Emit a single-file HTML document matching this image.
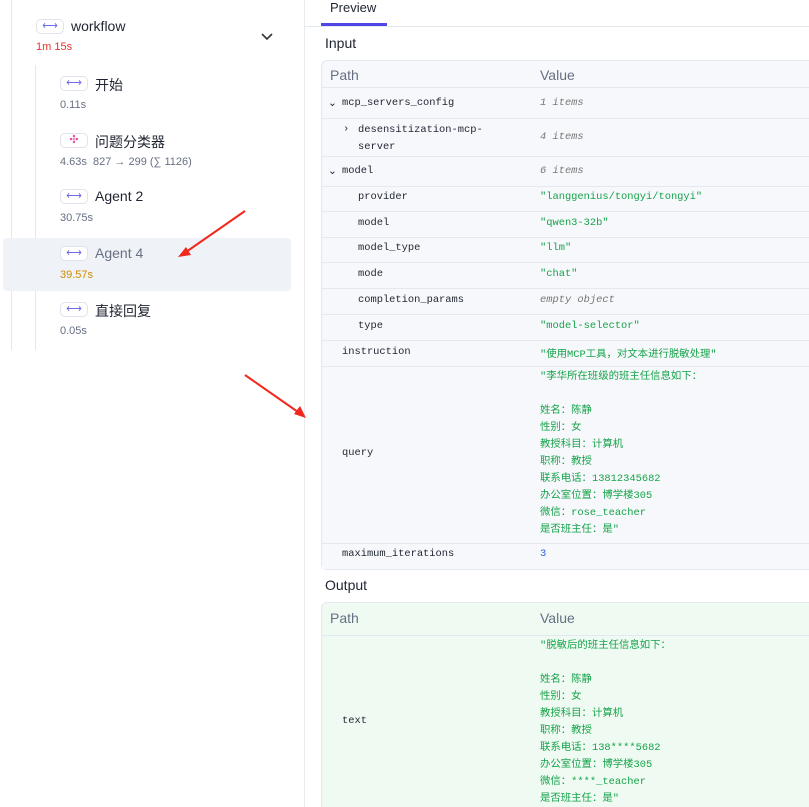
<!DOCTYPE html>
<html><head><meta charset="utf-8"><style>
*{margin:0;padding:0;box-sizing:border-box}
html,body{width:809px;height:807px;overflow:hidden}
body{background:#fff;font-family:"Liberation Sans","Noto Sans CJK SC",sans-serif;position:relative}
.a{position:absolute;white-space:nowrap}
.pill{position:absolute;width:28px;height:15px;border:1px solid #dfe3ec;border-radius:5px;background:#fff;color:#6c6cf0;font-size:11px;line-height:12px;text-align:center}
.nm{font-size:14px;color:#1f2430}
.tm{font-size:11px;color:#676f83}
.mono{font-family:"Liberation Mono","Noto Sans CJK SC",monospace;font-size:10.4px;color:#1f2430}
.g{color:#16a34a}.i{color:#777;font-style:italic}
.row{position:absolute;left:322px;width:500px;border-top:1px solid #e4e8ef;background:#f6f8fb}
</style></head><body>
<div class="a" style="left:304px;top:0;width:1px;height:807px;background:#e8ebf0"></div>
<div class="a" style="left:11px;top:0;width:1px;height:350px;background:#e4e7ec"></div>
<div class="a" style="left:35px;top:65px;width:1px;height:285px;background:#e4e7ec"></div>
<div class="a" style="left:3px;top:238px;width:288px;height:53px;background:#eff2f7;border-radius:4px"></div>
<div class="pill" style="left:36px;top:19px">⟷</div><div class="a nm" style="left:71px;top:18px">workflow</div>
<div class="a" style="left:36px;top:41px;font-size:11px;color:#e5322d">1m 15s</div>
<svg class="a" style="left:261px;top:33px" width="12" height="8"><path d="M1 1l5 5 5-5" stroke="#333" stroke-width="1.6" fill="none"/></svg>
<div class="pill" style="left:60px;top:76px">⟷</div><div class="a nm" style="left:95px;top:75px">开始</div><div class="a tm" style="left:60px;top:99px">0.11s</div>
<div class="pill" style="left:60px;top:133px;color:#e4509a">✣</div><div class="a nm" style="left:95px;top:132px">问题分类器</div><div class="a tm" style="left:60px;top:156px">4.63s&nbsp; 827 → 299 (∑ 1126)</div>
<div class="pill" style="left:60px;top:189px">⟷</div><div class="a nm" style="left:95px;top:188px">Agent 2</div><div class="a tm" style="left:60px;top:212px">30.75s</div>
<div class="pill" style="left:60px;top:246px">⟷</div><div class="a nm" style="left:95px;top:245px;color:#676f83">Agent 4</div><div class="a tm" style="left:60px;top:269px;color:#d08a00">39.57s</div>
<div class="pill" style="left:60px;top:302px">⟷</div><div class="a nm" style="left:95px;top:301px">直接回复</div><div class="a tm" style="left:60px;top:325px">0.05s</div>
<svg class="a" style="left:0;top:0" width="809" height="807">
<path d="M245 211L186 252" stroke="#f0281e" stroke-width="2"/><path d="M178 257l13-2-5-8z" fill="#f0281e"/>
<path d="M245 375L298 412" stroke="#f0281e" stroke-width="2"/><path d="M306 418l-6-12-6 8z" fill="#f0281e"/>
</svg>
<div class="a" style="left:330px;top:0;font-size:13px;color:#1f2430">Preview</div>
<div class="a" style="left:321px;top:23px;width:66px;height:3px;background:#4f46e5"></div>
<div class="a" style="left:305px;top:26px;width:504px;height:1px;background:#e4e8ef"></div>
<div class="a" style="left:325px;top:35px;font-size:14px;color:#1f2430">Input</div>
<div class="a" style="left:321px;top:60px;width:500px;height:510px;border:1px solid #e4e8ef;border-radius:6px;background:#f6f8fb"></div>
<div class="a" style="left:330px;top:67px;font-size:14px;color:#676f83">Path</div><div class="a" style="left:540px;top:67px;font-size:14px;color:#676f83">Value</div>
<div class="row" style="top:87px;height:31px"></div><div class="a mono" style="left:328px;top:97px">⌄</div><div class="a mono" style="left:342px;top:97px">mcp_servers_config</div><div class="a mono i" style="left:540px;top:97px">1 items</div>
<div class="row" style="top:118px;height:38px"></div><div class="a mono" style="left:343px;top:123px">›</div><div class="a mono" style="left:358px;top:122px;line-height:17px">desensitization-mcp-<br>server</div><div class="a mono i" style="left:540px;top:131px">4 items</div>
<div class="row" style="top:156px;height:30px"></div><div class="a mono" style="left:328px;top:165px">⌄</div><div class="a mono" style="left:342px;top:165px">model</div><div class="a mono i" style="left:540px;top:165px">6 items</div>
<div class="row" style="top:186px;height:25px"></div><div class="a mono" style="left:358px;top:191px">provider</div><div class="a mono g" style="left:540px;top:191px">"langgenius/tongyi/tongyi"</div>
<div class="row" style="top:211px;height:26px"></div><div class="a mono" style="left:358px;top:217px">model</div><div class="a mono g" style="left:540px;top:217px">"qwen3-32b"</div>
<div class="row" style="top:237px;height:25px"></div><div class="a mono" style="left:358px;top:242px">model_type</div><div class="a mono g" style="left:540px;top:242px">"llm"</div>
<div class="row" style="top:262px;height:26px"></div><div class="a mono" style="left:358px;top:268px">mode</div><div class="a mono g" style="left:540px;top:268px">"chat"</div>
<div class="row" style="top:288px;height:26px"></div><div class="a mono" style="left:358px;top:294px">completion_params</div><div class="a mono i" style="left:540px;top:294px">empty object</div>
<div class="row" style="top:314px;height:26px"></div><div class="a mono" style="left:358px;top:320px">type</div><div class="a mono g" style="left:540px;top:320px">"model-selector"</div>
<div class="row" style="top:340px;height:26px"></div><div class="a mono" style="left:342px;top:346px">instruction</div><div class="a mono g" style="left:540px;top:345px">"使用MCP工具，对文本进行脱敏处理"</div>
<div class="row" style="top:366px;height:177px"></div><div class="a mono" style="left:342px;top:447px">query</div>
<div class="a mono g" style="left:540px;top:369px;line-height:17px">"李华所在班级的班主任信息如下：<br><br>姓名：陈静<br>性别：女<br>教授科目：计算机<br>职称：教授<br>联系电话：13812345682<br>办公室位置：博学楼305<br>微信：rose_teacher<br>是否班主任：是"</div>
<div class="row" style="top:543px;height:26px"></div><div class="a mono" style="left:342px;top:548px">maximum_iterations</div><div class="a mono" style="left:540px;top:548px;color:#2563eb">3</div>
<div class="a" style="left:325px;top:577px;font-size:14px;color:#1f2430">Output</div>
<div class="a" style="left:321px;top:602px;width:500px;height:215px;border:1px solid #e4e8ef;border-radius:6px;background:#effaf2"></div>
<div class="a" style="left:330px;top:610px;font-size:14px;color:#676f83">Path</div><div class="a" style="left:540px;top:610px;font-size:14px;color:#676f83">Value</div>
<div class="a" style="left:322px;top:635px;width:500px;height:1px;background:#e4e8ef"></div>
<div class="a mono" style="left:342px;top:715px">text</div>
<div class="a mono g" style="left:540px;top:638px;line-height:17px">"脱敏后的班主任信息如下：<br><br>姓名：陈静<br>性别：女<br>教授科目：计算机<br>职称：教授<br>联系电话：138****5682<br>办公室位置：博学楼305<br>微信：****_teacher<br>是否班主任：是"</div>
</body></html>
